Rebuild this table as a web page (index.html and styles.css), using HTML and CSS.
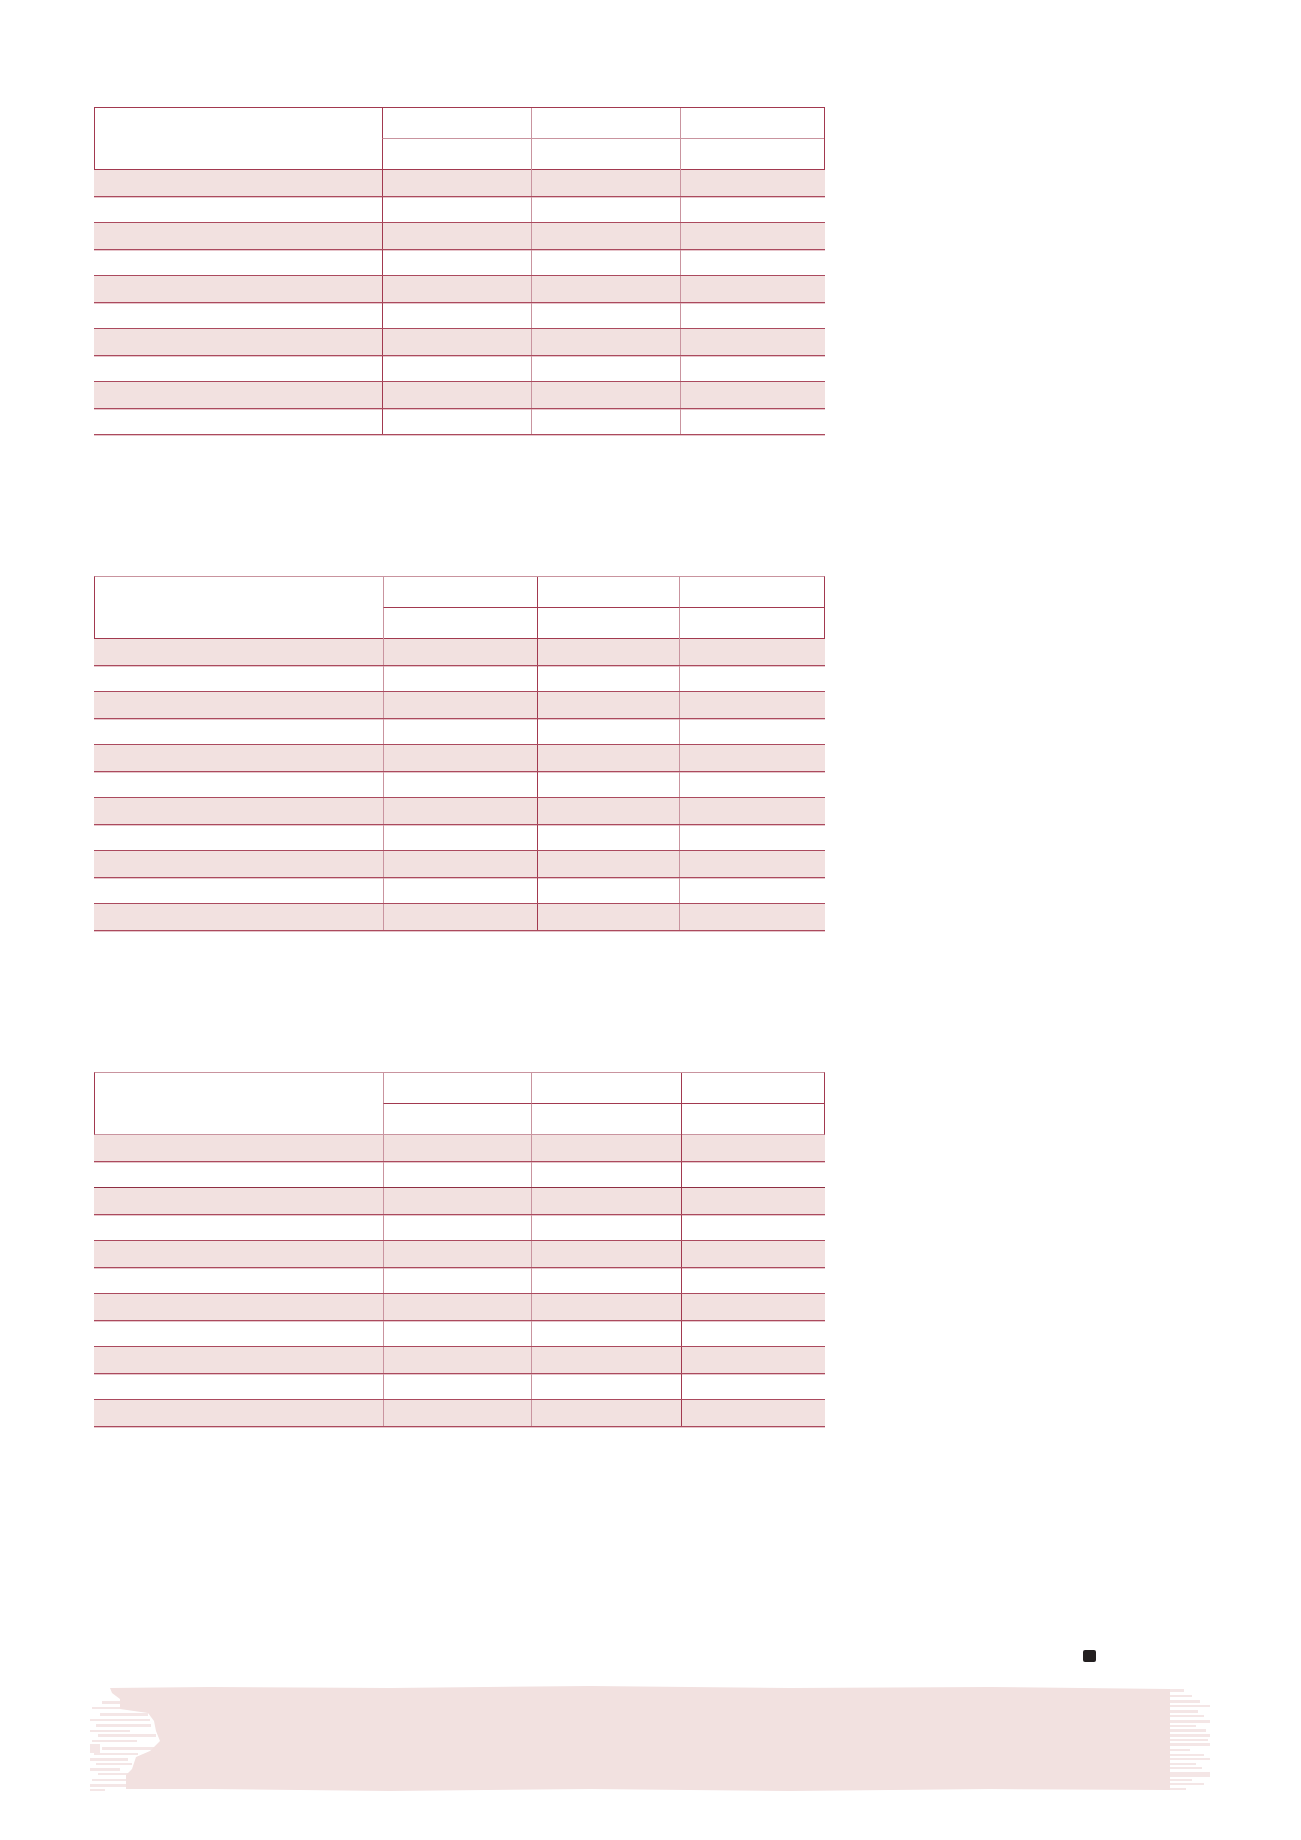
FILE: index.html
```html
<!DOCTYPE html>
<html>
<head>
<meta charset="utf-8">
<link rel="stylesheet" href="styles.css">
</head>
<body>
<div class="page">
  <div class="tbl t1">
    <div class="head"><div class="hc0"></div><div class="hc top d1"></div><div class="hc top d2"></div><div class="hc top d3"></div><div class="hc d1"></div><div class="hc d2"></div><div class="hc d3"></div></div>
    <div class="row alt"><div></div><div class="d1"></div><div class="d2"></div><div class="d3"></div></div>
    <div class="row"><div></div><div class="d1"></div><div class="d2"></div><div class="d3"></div></div>
    <div class="row alt"><div></div><div class="d1"></div><div class="d2"></div><div class="d3"></div></div>
    <div class="row"><div></div><div class="d1"></div><div class="d2"></div><div class="d3"></div></div>
    <div class="row alt"><div></div><div class="d1"></div><div class="d2"></div><div class="d3"></div></div>
    <div class="row"><div></div><div class="d1"></div><div class="d2"></div><div class="d3"></div></div>
    <div class="row alt"><div></div><div class="d1"></div><div class="d2"></div><div class="d3"></div></div>
    <div class="row"><div></div><div class="d1"></div><div class="d2"></div><div class="d3"></div></div>
    <div class="row alt"><div></div><div class="d1"></div><div class="d2"></div><div class="d3"></div></div>
    <div class="row"><div></div><div class="d1"></div><div class="d2"></div><div class="d3"></div></div>
  </div>

  <div class="tbl t2">
    <div class="head"><div class="hc0"></div><div class="hc top d1"></div><div class="hc top d2"></div><div class="hc top d3"></div><div class="hc d1"></div><div class="hc d2"></div><div class="hc d3"></div></div>
    <div class="row alt"><div></div><div class="d1"></div><div class="d2"></div><div class="d3"></div></div>
    <div class="row"><div></div><div class="d1"></div><div class="d2"></div><div class="d3"></div></div>
    <div class="row alt"><div></div><div class="d1"></div><div class="d2"></div><div class="d3"></div></div>
    <div class="row"><div></div><div class="d1"></div><div class="d2"></div><div class="d3"></div></div>
    <div class="row alt"><div></div><div class="d1"></div><div class="d2"></div><div class="d3"></div></div>
    <div class="row"><div></div><div class="d1"></div><div class="d2"></div><div class="d3"></div></div>
    <div class="row alt"><div></div><div class="d1"></div><div class="d2"></div><div class="d3"></div></div>
    <div class="row"><div></div><div class="d1"></div><div class="d2"></div><div class="d3"></div></div>
    <div class="row alt"><div></div><div class="d1"></div><div class="d2"></div><div class="d3"></div></div>
    <div class="row"><div></div><div class="d1"></div><div class="d2"></div><div class="d3"></div></div>
    <div class="row alt"><div></div><div class="d1"></div><div class="d2"></div><div class="d3"></div></div>
  </div>

  <div class="tbl t3">
    <div class="head"><div class="hc0"></div><div class="hc top d1"></div><div class="hc top d2"></div><div class="hc top d3"></div><div class="hc d1"></div><div class="hc d2"></div><div class="hc d3"></div></div>
    <div class="row alt"><div></div><div class="d1"></div><div class="d2"></div><div class="d3"></div></div>
    <div class="row"><div></div><div class="d1"></div><div class="d2"></div><div class="d3"></div></div>
    <div class="row alt"><div></div><div class="d1"></div><div class="d2"></div><div class="d3"></div></div>
    <div class="row"><div></div><div class="d1"></div><div class="d2"></div><div class="d3"></div></div>
    <div class="row alt"><div></div><div class="d1"></div><div class="d2"></div><div class="d3"></div></div>
    <div class="row"><div></div><div class="d1"></div><div class="d2"></div><div class="d3"></div></div>
    <div class="row alt"><div></div><div class="d1"></div><div class="d2"></div><div class="d3"></div></div>
    <div class="row"><div></div><div class="d1"></div><div class="d2"></div><div class="d3"></div></div>
    <div class="row alt"><div></div><div class="d1"></div><div class="d2"></div><div class="d3"></div></div>
    <div class="row"><div></div><div class="d1"></div><div class="d2"></div><div class="d3"></div></div>
    <div class="row alt"><div></div><div class="d1"></div><div class="d2"></div><div class="d3"></div></div>
  </div>

  <div class="marker-row"><div class="marker"></div></div>

  <div class="band">
    <svg width="1130" height="112" viewBox="0 0 1130 112" xmlns="http://www.w3.org/2000/svg">
      <g fill="#f2e1e0">
        <polygon points="20,3 120,2 300,3 500,1 700,3 900,2 1080,4 1080,105 900,104 700,106 500,104 300,106 120,104 36,104 36,90 42,84 46,72 60,66 70,56 66,46 64,36 58,28 30,24 30,14 22,8"/>
      </g>
      <g fill="#f2e1e0" opacity="0.8">
        <rect x="12" y="16" width="40" height="3"/>
        <rect x="2" y="22" width="50" height="2"/>
        <rect x="10" y="28" width="48" height="3"/>
        <rect x="0" y="34" width="60" height="2"/>
        <rect x="6" y="39" width="55" height="3"/>
        <rect x="0" y="45" width="40" height="2"/>
        <rect x="8" y="49" width="58" height="3"/>
        <rect x="2" y="55" width="45" height="2"/>
        <rect x="0" y="59" width="10" height="9"/>
        <rect x="12" y="62" width="52" height="3"/>
        <rect x="4" y="68" width="44" height="2"/>
        <rect x="0" y="73" width="38" height="3"/>
        <rect x="6" y="78" width="36" height="2"/>
        <rect x="0" y="83" width="30" height="3"/>
        <rect x="8" y="88" width="30" height="2"/>
        <rect x="2" y="94" width="34" height="2"/>
        <rect x="0" y="99" width="36" height="3"/>
        <rect x="0" y="104" width="15" height="2"/>
      </g>
      <g fill="#f2e1e0" opacity="0.8">
        <rect x="1080" y="4" width="14" height="3"/>
        <rect x="1080" y="10" width="22" height="2"/>
        <rect x="1080" y="15" width="30" height="3"/>
        <rect x="1080" y="20" width="40" height="2"/>
        <rect x="1080" y="25" width="28" height="3"/>
        <rect x="1080" y="30" width="34" height="2"/>
        <rect x="1080" y="35" width="40" height="3"/>
        <rect x="1080" y="40" width="26" height="2"/>
        <rect x="1080" y="44" width="36" height="3"/>
        <rect x="1080" y="49" width="40" height="3"/>
        <rect x="1080" y="54" width="38" height="2"/>
        <rect x="1080" y="58" width="40" height="3"/>
        <rect x="1080" y="64" width="20" height="2"/>
        <rect x="1080" y="69" width="34" height="2"/>
        <rect x="1080" y="73" width="40" height="2"/>
        <rect x="1080" y="78" width="26" height="2"/>
        <rect x="1080" y="82" width="32" height="2"/>
        <rect x="1080" y="87" width="40" height="5"/>
        <rect x="1080" y="94" width="22" height="2"/>
        <rect x="1080" y="98" width="34" height="2"/>
        <rect x="1080" y="103" width="16" height="2"/>
      </g>
    </svg>
  </div>
</div>
</body>
</html>
```

FILE: styles.css
```css
html, body {
  margin: 0;
  padding: 0;
  background: #ffffff;
  font-family: "Liberation Sans", Arial, sans-serif;
}

.page {
  padding: 107px 0 0 94px;
  width: 1207px;
  height: 1733px;
}

.tbl {
  width: 731px;
  --dark: #a2394f;
  --light: #c9949f;
  --fill: #f2e1e0;
}

.t1 { --c1: 288px; --c2: 149px; --c3: 149px; --v1: var(--dark); --v2: var(--light); --v3: var(--light); }
.t2 { --c1: 289px; --c2: 154px; --c3: 142px; --v1: var(--light); --v2: var(--dark); --v3: var(--light); margin-top: 141px; }
.t3 { --c1: 289px; --c2: 148px; --c3: 150px; --v1: var(--light); --v2: var(--light); --v3: var(--dark); margin-top: 141.5px; }

.head {
  display: grid;
  grid-template-columns: calc(var(--c1) - 1px) var(--c2) var(--c3) 1fr;
  grid-template-rows: 31px 31px;
  height: 63px;
  box-sizing: border-box;
  border: 1px solid var(--dark);
}
.t2 .head, .t3 .head { border-top-color: var(--light); }
.t3 .head { border-bottom-color: var(--light); }

.hc0 {
  grid-row: 1 / span 2;
  grid-column: 1;
}
.hc.top {
  border-bottom: 1px solid var(--light);
}
.t2 .hc.top, .t3 .hc.top { border-bottom-color: var(--dark); }

.d1 { border-left: 1px solid var(--v1); }
.d2 { border-left: 1px solid var(--v2); }
.d3 { border-left: 1px solid var(--v3); }

.row {
  display: grid;
  grid-template-columns: var(--c1) var(--c2) var(--c3) 1fr;
  height: 26.5px;
  box-sizing: border-box;
  border-bottom: 1px solid #ab4a5e;
  box-shadow: 0 1px 0 #e6c4ca;
}
.row.alt {
  background: var(--fill);
}
.t3 .row:nth-child(3) { border-bottom-color: #8e2e42; }

.marker-row {
  display: flex;
  justify-content: flex-start;
  padding-left: 989px;
  margin-top: 223.5px;
}
.marker {
  width: 13px;
  height: 12px;
  border-radius: 2px;
  background: #231f20;
}

.band {
  margin-top: 23px;
  margin-left: -4px;
  height: 112px;
}
.band svg {
  display: block;
}
```
